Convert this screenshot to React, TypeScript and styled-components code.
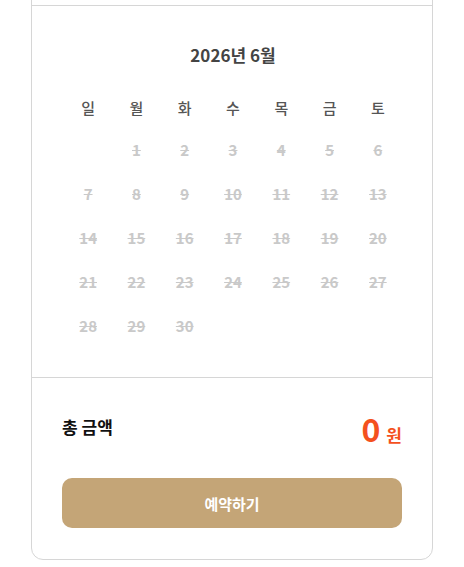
import React from 'react';
import styled, { createGlobalStyle } from 'styled-components';

const GlobalStyle = createGlobalStyle`
  body {
    margin: 0;
    background: #fff;
    font-family: "Noto Sans CJK KR", "Noto Sans", sans-serif;
  }
`;

const Card = styled.div`
  width: 400px;
  margin: -36px 0 0 31px;
  border: 1px solid #d6d6d6;
  border-radius: 12px;
  background: #fff;
  overflow: hidden;
`;

const TopSection = styled.div`
  height: 40px;
  border-bottom: 1px solid #d6d6d6;
`;

const CalendarSection = styled.div`
  padding: 37px 30px 30px 32px;
  border-bottom: 1px solid #d6d6d6;
`;

const MonthTitle = styled.h3`
  margin: 0 0 20px;
  text-align: center;
  font-size: 17px;
  line-height: 24px;
  font-weight: 700;
  color: #444;
`;

const Grid = styled.div`
  display: grid;
  grid-template-columns: repeat(7, 1fr);
`;

const WeekDay = styled.div`
  height: 40px;
  display: flex;
  align-items: center;
  justify-content: center;
  font-size: 15px;
  font-weight: 500;
  color: #555;
`;

const DayCell = styled.div<{ disabled?: boolean }>`
  height: 44px;
  display: flex;
  align-items: center;
  justify-content: center;
  font-size: 15px;
  font-weight: 600;
  color: ${({ disabled }) => (disabled ? '#c9c9c9' : '#333')};
  text-decoration: ${({ disabled }) => (disabled ? 'line-through' : 'none')};
`;

const TotalSection = styled.div`
  padding: 30px 30px 31px;
`;

const TotalRow = styled.div`
  display: flex;
  justify-content: space-between;
  align-items: center;
`;

const TotalLabel = styled.span`
  margin-bottom: 4px;
  font-size: 17px;
  font-weight: 700;
  color: #111;
`;

const Price = styled.span`
  display: flex;
  align-items: baseline;
  gap: 6px;
  color: #f4511e;
`;

const Amount = styled.span`
  font-size: 32px;
  font-weight: 700;
  line-height: 40px;
`;

const Unit = styled.span`
  font-size: 17px;
  font-weight: 700;
`;

const ReserveButton = styled.button`
  display: block;
  width: 100%;
  height: 50px;
  margin-top: 30px;
  border: none;
  border-radius: 10px;
  background: #c4a577;
  color: #fff;
  font-family: inherit;
  font-size: 15px;
  font-weight: 700;
  cursor: pointer;
`;

const weekDays = ['일', '월', '화', '수', '목', '금', '토'];
const startOffset = 1; // June 2026 starts on Monday
const daysInMonth = 30;

export default function App() {
  const cells: (number | null)[] = [
    ...Array(startOffset).fill(null),
    ...Array.from({ length: daysInMonth }, (_, i) => i + 1),
  ];

  return (
    <>
      <GlobalStyle />
      <Card>
        <TopSection />
        <CalendarSection>
          <MonthTitle>2026년 6월</MonthTitle>
          <Grid>
            {weekDays.map((d) => (
              <WeekDay key={d}>{d}</WeekDay>
            ))}
            {cells.map((day, i) => (
              <DayCell key={i} disabled>
                {day ?? ''}
              </DayCell>
            ))}
          </Grid>
        </CalendarSection>
        <TotalSection>
          <TotalRow>
            <TotalLabel>총 금액</TotalLabel>
            <Price>
              <Amount>0</Amount>
              <Unit>원</Unit>
            </Price>
          </TotalRow>
          <ReserveButton>예약하기</ReserveButton>
        </TotalSection>
      </Card>
    </>
  );
}
